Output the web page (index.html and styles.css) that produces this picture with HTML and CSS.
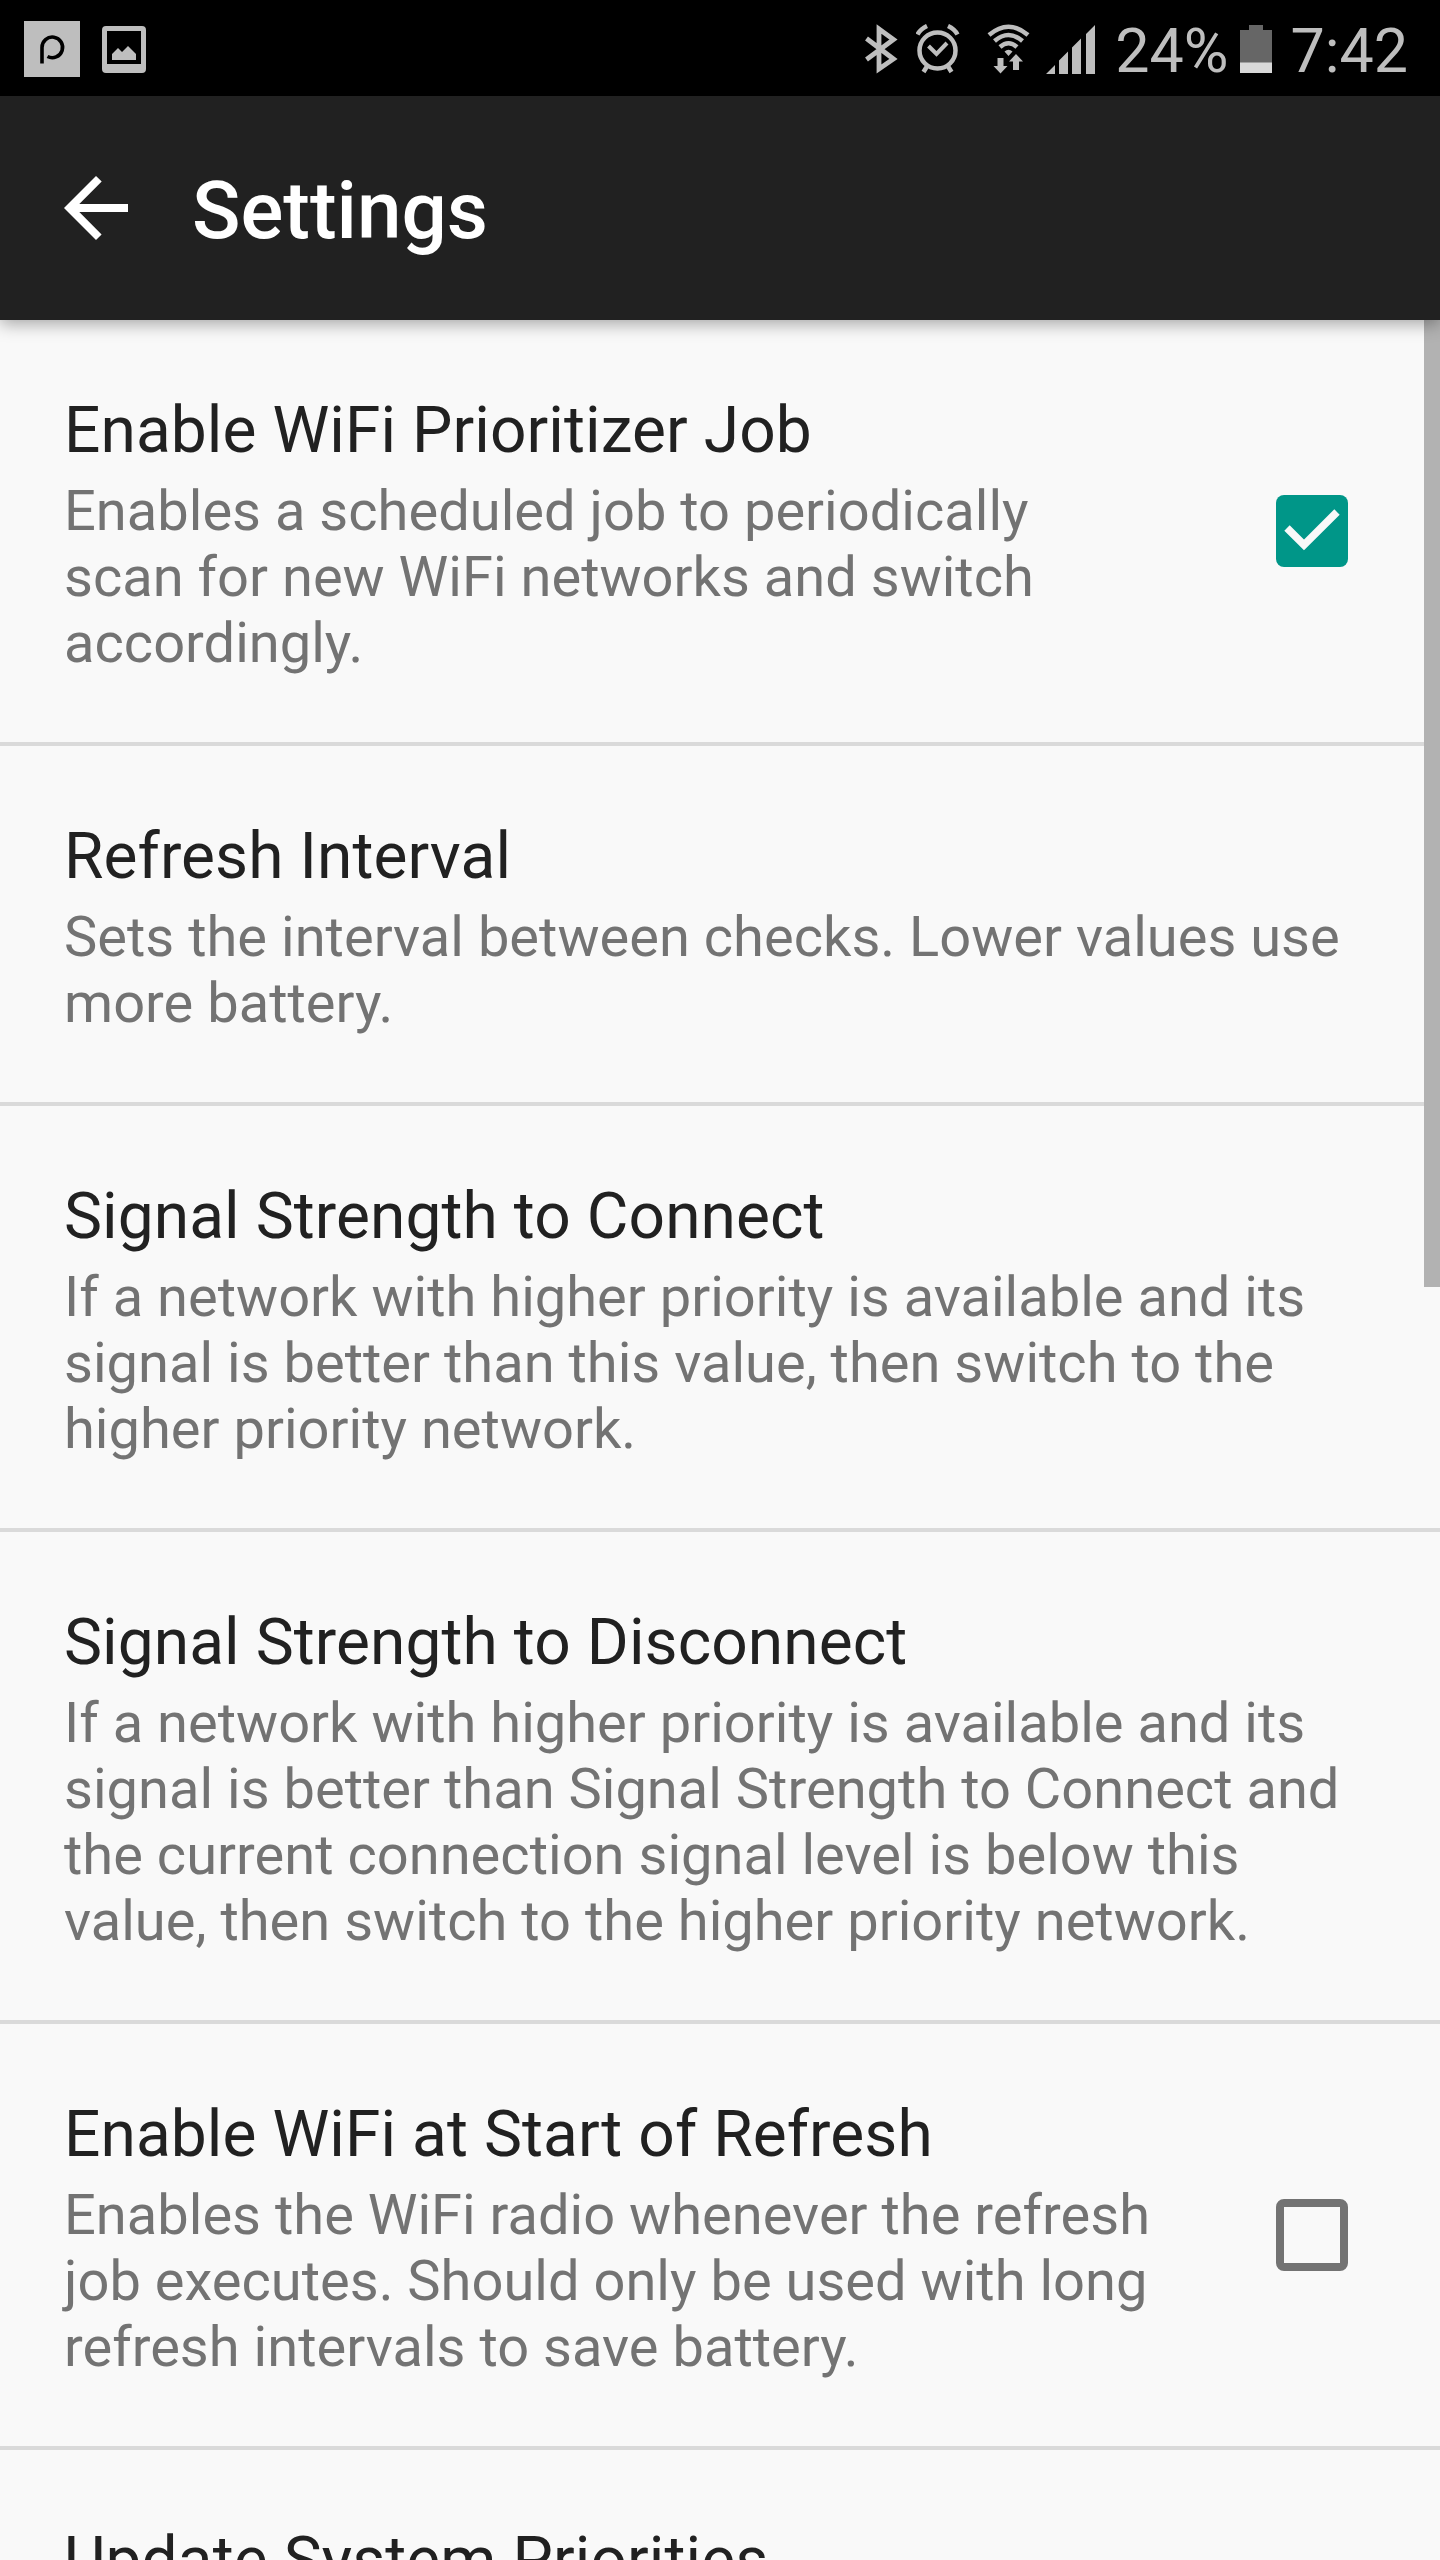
FILE: index.html
```html
<!DOCTYPE html>
<html lang="en">
<head>
<meta charset="utf-8">
<title>Settings</title>
<link rel="stylesheet" href="styles.css">
</head>
<body>
<div class="screen">
  <div class="status-bar">
    <div class="notifications">
      <svg width="56" height="56" viewBox="0 0 56 56"><path fill="#bebebe" d="M0 0h56v56H0z"/><path d="M18 42.500V26.500A10.300 10.300 0 1 1 23.500 35.500" fill="none" stroke="#000" stroke-width="3.600"/></svg>
      <svg width="44" height="47" viewBox="0 0 44 47"><path fill="#bebebe" fill-rule="evenodd" d="M4 0h36a4 4 0 0 1 4 4v39a4 4 0 0 1-4 4H4a4 4 0 0 1-4-4V4a4 4 0 0 1 4-4zM5 5v33h34V5z"/><path fill="#bebebe" d="M10 34v-6l6-6 4 4 6-6 8 8v6z"/></svg>
    </div>
    <div class="indicators">
      <svg class="bluetooth" width="34" height="50" viewBox="0 0 34 50"><path d="M2.500 14.500l27 20.500L15 45V5l14.500 10.500L2.500 35.500" fill="none" stroke="#bebebe" stroke-width="4.800"/></svg>
      <svg class="alarm" width="44" height="50" viewBox="0 0 44 50"><g fill="none" stroke="#bebebe"><circle cx="21.500" cy="26.500" r="18" stroke-width="4.500"/><path stroke-width="4" d="M12.500 22l8 8 10.500-11"/><path stroke-width="4.500" d="M1.500 10.500Q4.500 5 11 2M32 2Q38.500 5 41.500 10.500M11.500 41.500l-4 6.500M31.500 41.500l4 6.500"/></g></svg>
      <svg class="wifi" width="44" height="50" viewBox="0 0 44 50"><g fill="none" stroke="#bebebe" stroke-width="4.500"><path d="M2 11Q21.500-5.500 41 11"/><path d="M7.500 17Q21.500 5 35.500 17"/><path d="M13 23Q21.500 15.500 30 23"/></g><path fill="#bebebe" d="M17.500 27.500q4-3.500 8 0l-4 4.500zM10.500 34h6v8h4L13.500 49.500 6.500 42h4zM29 30l7 7.500h-4V46h-6v-8.500h-4z"/></svg>
      <svg class="signal" width="50" height="49" viewBox="0 0 50 49"><path fill="#bebebe" d="M0 49l9-9v9zM13 49V35.500l9-9V49zM26 49V22.500l9-9V49zM40 49V9l9-9v49z"/></svg>
      <span class="percent">24%</span>
      <svg class="battery" width="32" height="48" viewBox="0 0 32 48"><path fill="#666" d="M9 0h14v5h9v43H0V5h9z"/><path fill="#d8d8d8" d="M0 37.500h32V48H0z"/></svg>
      <span class="clock">7:42</span>
    </div>
  </div>
  <header class="app-bar">
    <svg width="64" height="64" viewBox="0 0 64 64"><path fill="#fff" d="M64 28H15.300l22.400-22.400L32 0 0 32l32 32 5.600-5.600L15.300 36H64z"/></svg>
    <h1>Settings</h1>
  </header>
  <main class="list">
    <section class="item">
      <div class="text"><h2>Enable WiFi Prioritizer Job</h2><p>Enables a scheduled job to periodically<br>scan for new WiFi networks and switch<br>accordingly.</p></div>
      <svg class="checkbox" width="72" height="72" viewBox="0 0 72 72"><rect width="72" height="72" rx="8" fill="#009688"/><path d="M11 33l17 17 33-33" fill="none" stroke="#f9f9f9" stroke-width="7.600"/></svg>
    </section>
    <section class="item">
      <div class="text"><h2>Refresh Interval</h2><p>Sets the interval between checks. Lower values use<br>more battery.</p></div>
    </section>
    <section class="item">
      <div class="text"><h2>Signal Strength to Connect</h2><p>If a network with higher priority is available and its<br>signal is better than this value, then switch to the<br>higher priority network.</p></div>
    </section>
    <section class="item">
      <div class="text"><h2>Signal Strength to Disconnect</h2><p>If a network with higher priority is available and its<br>signal is better than Signal Strength to Connect and<br>the current connection signal level is below this<br>value, then switch to the higher priority network.</p></div>
    </section>
    <section class="item">
      <div class="text"><h2>Enable WiFi at Start of Refresh</h2><p>Enables the WiFi radio whenever the refresh<br>job executes. Should only be used with long<br>refresh intervals to save battery.</p></div>
      <svg class="checkbox" width="72" height="72" viewBox="0 0 72 72"><path fill="#737373" fill-rule="evenodd" d="M8 0h56a8 8 0 0 1 8 8v56a8 8 0 0 1-8 8H8a8 8 0 0 1-8-8V8a8 8 0 0 1 8-8zM8 8v56h56V8z"/></svg>
    </section>
    <section class="item">
      <div class="text"><h2>Update System Priorities</h2></div>
    </section>
    <div class="scrollbar"></div>
  </main>
</div>
</body>
</html>
```
FILE: styles.css
```css
body {
  margin: 0;
  font-family: Roboto, sans-serif;
}

.screen {
  display: flex;
  flex-direction: column;
  width: 1440px;
  height: 2560px;
  overflow: hidden;
  background: #f9f9f9;
}

svg {
  display: block;
  flex: none;
}

.status-bar {
  flex: none;
  display: flex;
  justify-content: space-between;
  height: 96px;
  padding: 0 32px 0 24px;
  box-sizing: border-box;
  background: #000;
  color: #bebebe;
  font-size: 61px;
  line-height: 94px;
}

.notifications {
  display: flex;
  align-items: center;
  gap: 22px;
  padding-top: 2px;
}

.indicators {
  display: flex;
  align-items: center;
  padding-top: 2px;
}

.percent,
.clock {
  padding-top: 3px;
}

.alarm { margin-left: 18px; }
.wifi { margin-left: 27px; }
.signal { margin-left: 15px; }
.percent { margin-left: 19px; }
.battery { margin-left: 12px; }
.clock { margin-left: 18px; }

.app-bar {
  flex: none;
  display: flex;
  align-items: center;
  gap: 64px;
  height: 224px;
  padding-left: 64px;
  background: #212121;
  box-shadow: 0 4px 16px rgba(0, 0, 0, 0.34);
  position: relative;
  z-index: 1;
  color: #fff;
}

h1 {
  margin: 0;
  padding-top: 5px;
  font-size: 80px;
  font-weight: 500;
  line-height: 94px;
}

.list {
  flex: 1;
  min-height: 0;
  position: relative;
}

.item {
  display: flex;
  align-items: center;
  justify-content: space-between;
  padding: 0 92px 0 64px;
  border-bottom: 4px solid #dadada;
}

.text {
  padding: 73px 0 66px;
}

h2 {
  margin: 0 0 10px;
  font-size: 64px;
  font-weight: 400;
  line-height: 75px;
  letter-spacing: 0.09px;
  color: #212121;
}

p {
  margin: 0;
  font-size: 56px;
  line-height: 66px;
  letter-spacing: 0.02px;
  color: #737373;
  white-space: nowrap;
}

.scrollbar {
  position: absolute;
  top: 0;
  right: 0;
  width: 16px;
  height: 967px;
  background: #b2b2b2;
}
```
